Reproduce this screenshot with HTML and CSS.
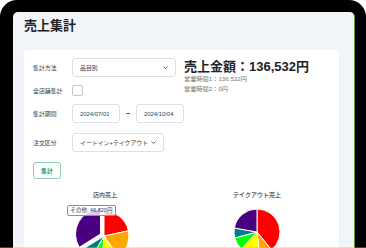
FILE: index.html
```html
<!DOCTYPE html>
<html lang="ja">
<head>
  <meta charset="UTF-8" />
  <meta name="viewport" content="width=device-width, initial-scale=1.0"/>
  <title>売上集計</title>
  <link rel="stylesheet" href="styles.css">
</head>
<body>

<div class="tablet">
  <div class="screen">
    <h1 class="page-title">売上集計</h1>

    <div class="card">
      <div class="card-top">
        <div class="filters">
          <div class="row">
            <span class="label">集計方法</span>
            <div class="select select-method">
              品目別
              <svg class="chev" width="5" height="3" viewBox="0 0 5 3"><polyline points="0.5,0.5 2.5,2.5 4.5,0.5" /></svg>
            </div>
          </div>
          <div class="row">
            <span class="label">全店舗集計</span>
            <span class="checkbox"></span>
          </div>
          <div class="row">
            <span class="label">集計期間</span>
            <div class="date">2024/07/01</div>
            <span class="tilde">~</span>
            <div class="date">2024/10/04</div>
          </div>
          <div class="row row-order">
            <span class="label">注文区分</span>
            <div class="select select-order">
              イートイン+テイクアウト
              <svg class="chev" width="5" height="3" viewBox="0 0 5 3"><polyline points="0.5,0.5 2.5,2.5 4.5,0.5" /></svg>
            </div>
          </div>
          <button class="btn-run">集計</button>
        </div>

        <div class="summary">
          <div class="total">売上金額：136,532円</div>
          <div class="sub">営業時間1：136,532円</div>
          <div class="sub">営業時間2：0円</div>
        </div>
      </div>

      <div class="charts">
        <div class="chart">
          <div class="chart-title">店内売上</div>
          <svg id="pieStore" class="pie" width="60" height="60"></svg>
          <div class="tooltip">その他: 46,820円</div>
        </div>
        <div class="chart">
          <div class="chart-title">テイクアウト売上</div>
          <svg id="pieTakeout" class="pie" width="60" height="60"></svg>
        </div>
      </div>
    </div>
  </div>
</div>

<script src="script.js"></script>
</body>
</html>
```

FILE: styles.css
```css
* { box-sizing: border-box; margin: 0; padding: 0; }
html, body {
  height: 100%;
  overflow: hidden;
}
body {
  background: #fff;
  font-family: "Liberation Sans", "Noto Sans CJK JP", sans-serif;
  color: #333;
}
body::after {
  content: "";
  position: fixed;
  left: 0;
  right: 0;
  bottom: 0;
  height: 1px;
  background: rgba(240, 170, 110, 0.35);
}
.tablet {
  height: 100%;
  background: #000;
  border-radius: 17px 17px 0 0;
  padding: 12px 11px 0 13px;
  overflow: hidden;
}
.screen {
  height: 100%;
  overflow: hidden;
  background: #f1f4f8;
  border-radius: 5px 5px 0 0;
  border-right: 1px solid #5b9a2e;
  padding: 6px 15px 0 11px;
}
.page-title {
  font-size: 13px;
  line-height: 16px;
  font-weight: bold;
  color: #222;
}
.card {
  margin-top: 16px;
  width: 315px;
  height: 220px;
  background: #fff;
  border-radius: 3px;
  padding: 8px 9px;
  box-shadow: 0 0 2px rgba(0, 0, 0, 0.06);
}
.card-top {
  display: flex;
  gap: 8px;
}
.filters {
  width: 143px;
  display: flex;
  flex-direction: column;
  align-items: flex-start;
  gap: 8px;
}
.row {
  display: flex;
  align-items: center;
}
.row-order, .btn-run {
  margin-top: 2px;
}
.label {
  width: 39px;
  font-size: 5.9px;
  color: #3a3a3a;
}
.select {
  height: 19px;
  border: 1px solid #dcdfe3;
  border-radius: 3px;
  padding: 0 7px 0 7px;
  display: flex;
  align-items: center;
  justify-content: space-between;
  font-size: 5.9px;
  color: #3a3a3a;
}
.select-method { width: 104px; }
.select-order { width: 92px; }
.chev polyline {
  fill: none;
  stroke: #555;
  stroke-width: 0.9;
}
.checkbox {
  width: 11px;
  height: 11px;
  border: 1px solid #c3c8ce;
  border-radius: 2px;
}
.date {
  width: 48px;
  height: 19px;
  border: 1px solid #dcdfe3;
  border-radius: 3px;
  padding-left: 7px;
  display: flex;
  align-items: center;
  font-size: 5.9px;
  color: #3a3a3a;
}
.tilde {
  width: 16px;
  text-align: center;
  font-size: 8px;
  font-weight: bold;
  color: #333;
}
.btn-run {
  width: 28px;
  height: 17px;
  background: #fff;
  border: 1px solid #8fd1aa;
  border-radius: 3px;
  color: #2a9a5a;
  font-family: inherit;
  font-size: 5.9px;
  font-weight: bold;
}
.summary {
  margin-top: 1px;
}
.total {
  font-size: 13px;
  line-height: 15px;
  font-weight: bold;
  color: #222;
}
.sub {
  font-size: 6.2px;
  line-height: 10px;
  color: #777;
}
.charts {
  display: grid;
  grid-template-columns: 1fr 1fr;
  margin: 12px -3px 0 -4px;
}
.chart {
  position: relative;
  display: flex;
  flex-direction: column;
  align-items: center;
}
.chart-title {
  font-size: 6px;
  line-height: 8px;
  font-weight: bold;
  color: #666;
}
.pie {
  margin-top: 6px;
  overflow: visible;
}
.tooltip {
  position: absolute;
  left: 38px;
  top: 14px;
  width: 49px;
  height: 11px;
  background: rgba(255, 255, 255, 0.8);
  border: 1px solid #9b80c4;
  border-radius: 2px;
  font-size: 5.5px;
  line-height: 9px;
  text-align: center;
  color: #333;
}
```

FILE: script.js
```js
const pies = {
  pieStore: {
    cx: 29, cy: 31, r: 25,
    slices: [
      { end: 78, color: '#ff0000' },
      { end: 145, color: '#ffa500' },
      { end: 185, color: '#ffff00' },
      { end: 210, color: '#00ff00' },
      { end: 238, color: '#008080' },
      { end: 360, color: '#4b0082', offset: 4 }
    ]
  },
  pieTakeout: {
    cx: 30, cy: 27, r: 23,
    slices: [
      { end: 141, color: '#ff0000' },
      { end: 173, color: '#ffa500' },
      { end: 223, color: '#ffff00' },
      { end: 255, color: '#00ff00' },
      { end: 280, color: '#008080' },
      { end: 360, color: '#4b0082' }
    ]
  }
};

function point(cx, cy, r, deg) {
  const a = deg * Math.PI / 180;
  return [cx + r * Math.sin(a), cy - r * Math.cos(a)];
}

Object.keys(pies).forEach(id => {
  const svg = document.getElementById(id);
  const pie = pies[id];
  let start = 0;
  pie.slices.forEach(s => {
    const mid = (start + s.end) / 2;
    const [dx, dy] = s.offset ? point(0, 0, s.offset, mid) : [0, 0];
    const cx = pie.cx + dx;
    const cy = pie.cy + dy;
    const [x1, y1] = point(cx, cy, pie.r, start);
    const [x2, y2] = point(cx, cy, pie.r, s.end);
    const large = s.end - start > 180 ? 1 : 0;
    const path = document.createElementNS('http://www.w3.org/2000/svg', 'path');
    path.setAttribute('d', `M${cx} ${cy} L${x1} ${y1} A${pie.r} ${pie.r} 0 ${large} 1 ${x2} ${y2} Z`);
    path.setAttribute('fill', s.color);
    path.setAttribute('stroke', '#fff');
    path.setAttribute('stroke-width', '1');
    svg.appendChild(path);
    start = s.end;
  });
});
```
